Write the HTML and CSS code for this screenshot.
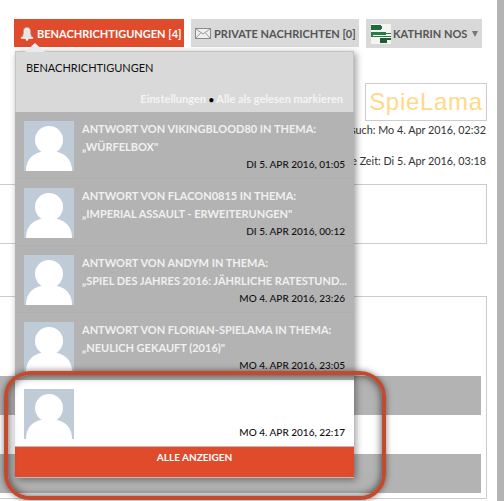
FILE: index.html
```html
<!DOCTYPE html>
<html lang="de">
<head>
  <meta charset="UTF-8">
  <meta name="viewport" content="width=device-width, initial-scale=1.0">
  <title>Benachrichtigungen</title>
  <link rel="stylesheet" href="styles.css">
</head>
<body>
  <div class="main">
    <nav class="tabs">
      <a class="tab tab-active">
        <svg class="tab-icon" width="14" height="15" viewBox="0 0 16 18">
          <path d="M8 1.500c-3 0-4.300 2.200-4.300 5 0 3.500-.7 5.500-2.400 7.200h13.400c-1.700-1.700-2.400-3.700-2.400-7.200 0-2.800-1.300-5-4.300-5z" fill="#ece6e2" stroke="#a8988f" stroke-width="1"/>
          <rect x=".5" y="13.500" width="15" height="1.800" rx=".8" fill="#fff"/>
          <circle cx="8" cy="16.300" r="1.500" fill="#fff"/>
        </svg>
        Benachrichtigungen [4]
      </a>
      <a class="tab tab-mail">
        <svg class="tab-icon" width="16" height="11" viewBox="0 0 16 11">
          <rect x=".5" y=".5" width="15" height="10" fill="#efefef" stroke="#8a8a8a"/>
          <path d="M1 1l7 5 7-5M1 10l5-5.500M15 10l-5-5.500" fill="none" stroke="#9a9a9a"/>
        </svg>
        Private Nachrichten [0]
      </a>
      <a class="tab tab-user">
        <svg class="tab-icon" width="20" height="20" viewBox="0 0 20 20">
          <rect width="20" height="20" fill="#f4f4f0"/>
          <path d="M0 1h10v1h1v3h-1v1H0z" fill="#1f6b3a"/>
          <path d="M0 8h15v1h5v1h-5v1H2v1h18v1H0z" fill="#2a7a45"/>
          <path d="M9 14h11v2h-4v3H9z" fill="#1f5a33"/>
        </svg>
        Kathrin Nos
        <span class="caret"></span>
      </a>
    </nav>

    <div class="logo">SpieLama</div>
    <p class="visit">Letzter Besuch: Mo 4. Apr 2016, 02:32</p>
    <p class="visit">Aktuelle Zeit: Di 5. Apr 2016, 03:18</p>

    <div class="box box-small"></div>
    <div class="box box-rows">
      <div class="row"></div>
      <div class="row"></div>
    </div>
  </div>
  <div class="edge"></div>

  <div class="dropdown">
    <span class="arrow"></span>
    <div class="drop-head">
      <h3>Benachrichtigungen</h3>
      <p class="drop-links"><a>Einstellungen</a> <b>•</b> <a>Alle als gelesen markieren</a></p>
    </div>

    <div class="notice">
      <svg class="avatar" viewBox="0 0 50 50"><use href="#person"/></svg>
      <div class="notice-body">
        <p class="notice-title">Antwort von Vikingblood80 in Thema:</p>
        <p class="notice-title">„Würfelbox"</p>
        <p class="notice-date">Di 5. Apr 2016, 01:05</p>
      </div>
    </div>
    <div class="notice">
      <svg class="avatar" viewBox="0 0 50 50"><use href="#person"/></svg>
      <div class="notice-body">
        <p class="notice-title">Antwort von Flacon0815 in Thema:</p>
        <p class="notice-title">„Imperial Assault - Erweiterungen"</p>
        <p class="notice-date">Di 5. Apr 2016, 00:12</p>
      </div>
    </div>
    <div class="notice">
      <svg class="avatar" viewBox="0 0 50 50"><use href="#person"/></svg>
      <div class="notice-body">
        <p class="notice-title">Antwort von AndyM in Thema:</p>
        <p class="notice-title">„Spiel des Jahres 2016: Jährliche Ratestund...</p>
        <p class="notice-date">Mo 4. Apr 2016, 23:26</p>
      </div>
    </div>
    <div class="notice">
      <svg class="avatar" viewBox="0 0 50 50"><use href="#person"/></svg>
      <div class="notice-body">
        <p class="notice-title">Antwort von Florian-Spielama in Thema:</p>
        <p class="notice-title">„Neulich gekauft (2016)"</p>
        <p class="notice-date">Mo 4. Apr 2016, 23:05</p>
      </div>
    </div>
    <div class="notice notice-read">
      <svg class="avatar" viewBox="0 0 50 50"><use href="#person"/></svg>
      <div class="notice-body">
        <p class="notice-title">&nbsp;</p>
        <p class="notice-title">&nbsp;</p>
        <p class="notice-date">Mo 4. Apr 2016, 22:17</p>
      </div>
    </div>
    <a class="show-all">Alle anzeigen</a>
  </div>

  <div class="callout"></div>

  <svg width="0" height="0" class="defs">
    <symbol id="person" viewBox="0 0 50 50">
      <rect width="50" height="50" fill="#bfcbd6"/>
      <circle cx="25" cy="19" r="14" fill="#fff"/>
      <path d="M2 50c0-14 10-20 23-20s23 6 23 20z" fill="#fff"/>
    </symbol>
  </svg>
</body>
</html>
```
FILE: styles.css
```css
* {
  box-sizing: border-box;
}

body {
  display: flex;
  margin: 0;
  height: 501px;
  overflow: hidden;
  background-color: #fff;
  font-family: Lato, sans-serif;
  font-size: 12px;
  color: #333;
}

p, h3 {
  margin: 0;
}

.main {
  flex: 1;
  min-width: 0;
  padding-top: 19px;
}

.edge {
  width: 7px;
  background-color: #b3b3b3;
}

.defs {
  position: absolute;
}

/* top tabs */
.tabs {
  display: flex;
  align-items: flex-start;
  padding-left: 14px;
  gap: 7px;
}

.tab {
  position: relative;
  display: flex;
  align-items: center;
  gap: 3px;
  height: 28px;
  padding: 0 4px;
  background-color: #d9d9d9;
  color: #555;
  font-size: 11px;
  font-weight: 700;
  text-transform: uppercase;
  white-space: nowrap;
}

.tab-icon {
  flex: none;
}

.tab-active {
  width: 170px;
  padding-left: 6px;
  background-color: #e04b2c;
  color: #fff;
}

.tab-mail {
  width: 168px;
}

.tab-user {
  width: 116px;
  height: 29px;
  gap: 2px;
  padding-left: 5px;
}

.caret {
  margin-left: 3px;
  border-top: 6px solid #777;
  border-left: 3px solid transparent;
  border-right: 3px solid transparent;
}

/* background of the page, mostly covered */
.logo {
  width: 122px;
  height: 38px;
  margin: 35px 10px 0 auto;
  border: 1px solid #ccc;
  color: #ffd98a;
  font-family: "Liberation Sans", sans-serif;
  font-size: 24px;
  line-height: 36px;
  letter-spacing: .7px;
  text-align: center;
  white-space: nowrap;
}

.visit {
  height: 31px;
  padding-right: 11px;
  line-height: 17px;
  font-size: 10.8px;
  text-align: right;
  white-space: nowrap;
}

.box {
  margin: 0 10px 0 -2px;
  border: 1px solid #ccc;
}

.box-small {
  height: 60px;
  margin-top: 1px;
}

.box-rows {
  height: 203px;
  margin-top: 52px;
  padding: 79px 5px 0 0;
}

.row {
  height: 39px;
  margin-bottom: 39px;
  background-color: #b3b3b3;
}

/* dropdown lying over the page */
.dropdown {
  position: absolute;
  top: 51px;
  left: 15px;
  width: 339px;
  background-color: #b3b3b3;
  box-shadow: 2px 2px 7px rgba(0, 0, 0, .4);
}

.arrow {
  position: absolute;
  top: -8px;
  left: 10px;
  border-bottom: 9px solid #e6ecf2;
  border-left: 10px solid transparent;
  border-right: 10px solid transparent;
}

.drop-head {
  height: 61px;
  padding: 9px 10px 0 10px;
  background-color: #d9d9d9;
  border: 1px solid #c4c4c4;
  border-bottom: 0;
}

.drop-head h3 {
  font-size: 11px;
  font-weight: 400;
  line-height: 14px;
  color: #111;
  text-transform: uppercase;
}

.drop-links {
  margin-top: 16px;
  font-size: 11px;
  font-weight: 700;
  line-height: 15px;
  color: #f4f4f4;
  text-align: right;
}

.drop-links b {
  color: #000;
  font-size: 9px;
}

.notice {
  display: flex;
  gap: 8px;
  height: 67px;
  padding: 9px 9px 0;
  border-bottom: 1px solid #aeaeae;
}

.avatar {
  flex: none;
  width: 50px;
  height: 50px;
}

.notice-body {
  flex: 1;
  min-width: 0;
  margin-top: -1px;
}

.notice-title {
  height: 18px;
  font-size: 11px;
  font-weight: 700;
  line-height: 18px;
  color: #f0f0f0;
  text-transform: uppercase;
  white-space: nowrap;
}

.notice-date {
  font-size: 10px;
  font-weight: 500;
  line-height: 17px;
  color: #111;
  text-align: right;
  text-transform: uppercase;
}

.notice-read {
  background-color: #fff;
  border-bottom-color: #bbb;
}

.show-all {
  display: block;
  height: 31px;
  padding-left: 20px;
  background-color: #e04b2c;
  border-bottom: 1px solid #bbb;
  color: #fff;
  font-size: 10px;
  font-weight: 700;
  line-height: 21px;
  text-align: center;
  text-transform: uppercase;
}

/* hand drawn highlight on top of the screenshot */
.callout {
  position: absolute;
  top: 371px;
  left: 4px;
  width: 382px;
  height: 129px;
  border: 4px solid #c24a2f;
  border-radius: 26px;
  box-shadow: 0 0 6px rgba(0, 0, 0, .5), inset 0 0 8px rgba(0, 0, 0, .7);
}
```
